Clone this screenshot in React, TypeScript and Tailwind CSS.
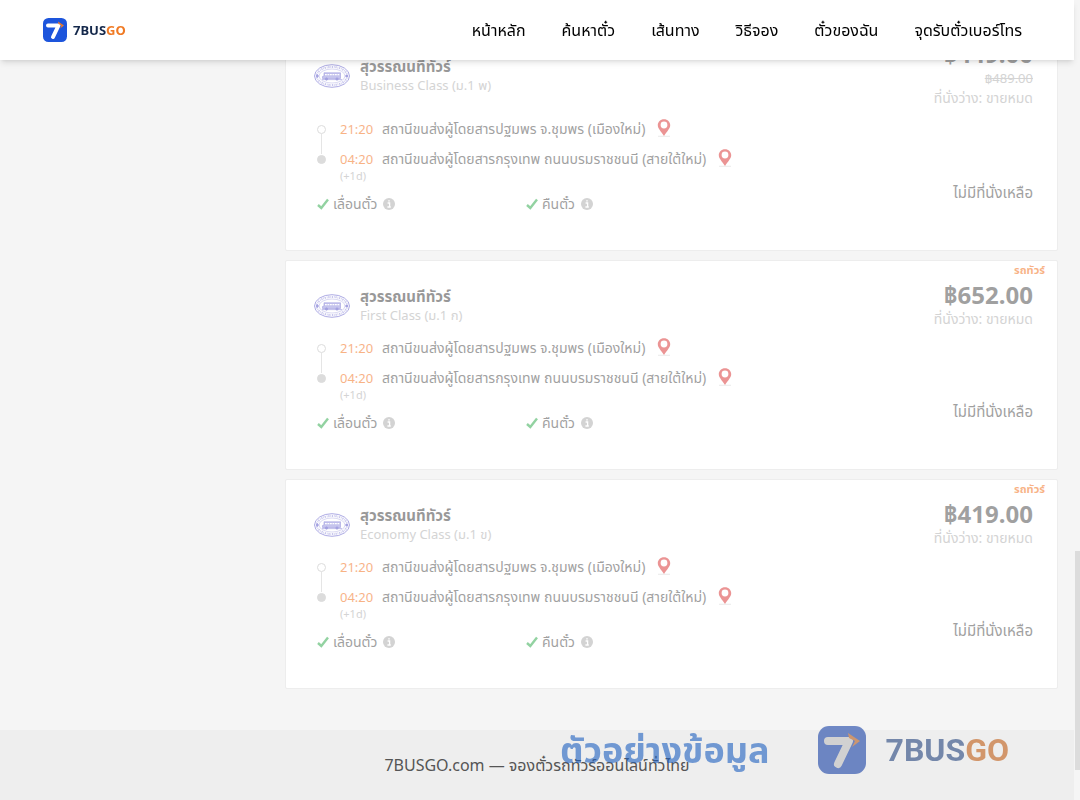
import clsx from 'clsx';

type Trip = {
  id: number;
  seatClass: string;
  price: string;
  oldPrice?: string;
};

const navLinks = ['หน้าหลัก', 'ค้นหาตั๋ว', 'เส้นทาง', 'วิธีจอง', 'ตั๋วของฉัน', 'จุดรับตั๋วเบอร์โทร'];

const trips: Trip[] = [
  { id: 1, seatClass: 'Business Class (ม.1 พ)', price: '฿449.00', oldPrice: '฿489.00' },
  { id: 2, seatClass: 'First Class (ม.1 ก)', price: '฿652.00' },
  { id: 3, seatClass: 'Economy Class (ม.1 ข)', price: '฿419.00' },
];

const LogoMark = ({ className }: { className?: string }) => (
  <svg viewBox="0 0 48 48" className={className} aria-hidden="true">
    <rect width="48" height="48" rx="11" fill="#1d55dc" />
    <path d="M10 15H31L20 38" fill="none" stroke="#fff" strokeWidth="8" strokeLinecap="round" strokeLinejoin="round" />
    <path d="M30 7L42 15L34 21L37 15L31 12Z" fill="#f27a24" />
  </svg>
);

const OperatorSeal = () => (
  <svg viewBox="0 0 36 24" className="h-6 w-9 shrink-0" fill="none" stroke="#4944c4" aria-hidden="true">
    <ellipse cx="18" cy="12" rx="17.5" ry="11.3" strokeWidth="0.9" />
    <ellipse cx="18" cy="12" rx="13" ry="7" strokeWidth="0.4" />
    <ellipse cx="18" cy="12" rx="15.2" ry="9.1" strokeWidth="2" strokeDasharray="1.3 0.9 0.6 0.8" opacity="0.6" />
    <path d="M10 8.8H26.5V14.5H8.5V12.5L10 12Z" fill="#8d8add" strokeWidth="0.6" />
    <path d="M11 10.6H25.5" stroke="#fff" strokeWidth="1.4" strokeDasharray="1.8 0.7" />
    <path d="M8 15.6H28" strokeWidth="0.7" />
    <circle cx="12.5" cy="15" r="1.1" fill="#4944c4" />
    <circle cx="23" cy="15" r="1.1" fill="#4944c4" />
    <circle cx="3.3" cy="12" r="1" fill="#4944c4" />
    <circle cx="32.7" cy="12" r="1" fill="#4944c4" />
  </svg>
);

const PinIcon = () => (
  <svg viewBox="0 0 14 18" className="mb-0.5 h-[18px] w-3.5 shrink-0" aria-hidden="true">
    <path d="M1 17.3H13" stroke="#ccc" strokeWidth="0.8" />
    <path
      fillRule="evenodd"
      fill="#d92b2b"
      d="M7 0.2C3.4 0.2 0.8 2.9 0.8 6.3C0.8 9.5 4 12.4 7 17C10 12.4 13.2 9.5 13.2 6.3C13.2 2.9 10.6 0.2 7 0.2ZM7 2.6A3.4 3.4 0 1 1 7 9.4A3.4 3.4 0 1 1 7 2.6Z"
    />
  </svg>
);

const Perk = ({ label }: { label: string }) => (
  <div className="flex w-[209px] items-center">
    <svg viewBox="0 0 12 12" className="mr-1 h-3 w-3" aria-hidden="true">
      <path d="M1 7L4.3 10L11 1.5" fill="none" stroke="#28a745" strokeWidth="2.4" />
    </svg>
    <span>{label}</span>
    <svg viewBox="0 0 12 12" className="ml-1.5 h-3 w-3" aria-hidden="true">
      <circle cx="6" cy="6" r="6" fill="#a8a8a8" />
      <path d="M4.6 5H6.6V9M4.4 9H7.8M5.2 2.8H6.8" fill="none" stroke="#fff" strokeWidth="1.3" />
    </svg>
  </div>
);

const Stop = ({ time, place, first }: { time: string; place: string; first?: boolean }) => (
  <div className="flex h-[30px] items-center">
    <span
      className={clsx('mr-3.5 size-[9px] rounded-full border', first ? 'border-[#bbb] bg-white' : 'border-[#bbb] bg-[#bbb]')}
    />
    <span className="w-[42px] text-[13px] text-[#f26a0c]">{time}</span>
    <span className="mr-3 text-[#444]">{place}</span>
    <PinIcon />
  </div>
);

const TripCard = ({ trip }: { trip: Trip }) => (
  <article className="rounded-xs border border-[#ededed] bg-white">
    <div className="flex justify-between pr-6 pb-9 pl-7 opacity-50">
      <div>
        <div className={clsx('flex items-center gap-2.5', trip.oldPrice ? 'pt-[37px] pb-[19px]' : 'pt-[26px] pb-2')}>
          <OperatorSeal />
          <div className="leading-[19px]">
            <h2 className="text-[15px] font-bold text-[#333]">สุวรรณนทีทัวร์</h2>
            <p className="text-[13px] text-[#aaa]">{trip.seatClass}</p>
          </div>
        </div>
        <div className="relative pl-[3px]">
          <span className="absolute top-5 left-[7px] h-5 w-px bg-[#ccc]" />
          <Stop first time="21:20" place="สถานีขนส่งผู้โดยสารปฐมพร จ.ชุมพร (เมืองใหม่)" />
          <Stop time="04:20" place="สถานีขนส่งผู้โดยสารกรุงเทพ ถนนบรมราชชนนี (สายใต้ใหม่)" />
        </div>
        <p className="-mt-1 pl-[26px] text-[11px] leading-3 text-[#aaa]">(+1d)</p>
        <div className="flex pt-3 pl-[3px] text-[#444]">
          <Perk label="เลื่อนตั๋ว" />
          <Perk label="คืนตั๋ว" />
        </div>
      </div>
      <div className="flex flex-col items-end">
        <span className="-mr-3 pt-[3px] text-[11px] leading-3 font-bold text-[#f26a0c]">รถทัวร์</span>
        <strong className="pt-[5px] text-2xl leading-7 text-[#444]">{trip.price}</strong>
        {trip.oldPrice && <s className="text-[13px] leading-5 text-[#aaa]">{trip.oldPrice}</s>}
        <span className="leading-5 text-[#aaa]">ที่นั่งว่าง: ขายหมด</span>
        <span className="mt-auto mb-3 text-[15px] text-[#444]">ไม่มีที่นั่งเหลือ</span>
      </div>
    </div>
  </article>
);

export default function App() {
  return (
    <div className="min-h-screen bg-[#f5f5f5] font-['Noto_Sans','Noto_Sans_Thai',sans-serif] text-sm leading-5">
      <header className="fixed inset-x-0 top-0 z-10 mr-1.5 flex h-[60px] items-center justify-between bg-white pr-[52px] pl-[43px] shadow-md">
        <a href="#" className="flex items-center gap-1.5 text-[13px] font-bold text-[#14284b]">
          <LogoMark className="size-6" />
          <span>
            7BUS<span className="text-[#f07a24]">GO</span>
          </span>
        </a>
        <nav className="flex gap-9 text-base text-black">
          {navLinks.map((link) => (
            <a key={link} href="#">
              {link}
            </a>
          ))}
        </nav>
      </header>

      <main className="flex flex-col gap-[9px] pt-[19px] pr-[22px] pb-[41px] pl-[285px]">
        {trips.map((trip) => (
          <TripCard key={trip.id} trip={trip} />
        ))}
      </main>

      <footer className="mr-1.5 flex h-[70px] items-center justify-center bg-[#eee] text-base text-[#555]">
        7BUSGO.com — จองตั๋วรถทัวร์ออนไลน์ทั่วไทย
      </footer>

      {/* sample-data watermark */}
      <div className="pointer-events-none fixed right-[71px] bottom-[26px] flex items-center font-bold opacity-60">
        <span className="mr-12 text-4xl text-[#1d5fc0]">ตัวอย่างข้อมูล</span>
        <LogoMark className="mr-5 size-12 brightness-75" />
        <span className="font-['Roboto',sans-serif] text-[32px] text-[#24447e]">
          7BUS<span className="text-[#c05c14]">GO</span>
        </span>
      </div>

      <div className="fixed inset-y-0 right-0 w-1.5 bg-[#f5f5f5]">
        <div className="fixed right-0 bottom-[30px] h-[219px] w-[5px] bg-[#dcdcdc]" />
      </div>
    </div>
  );
}
